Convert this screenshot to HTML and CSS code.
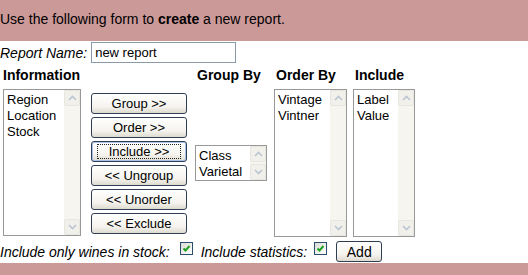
FILE: index.html
```html
<!DOCTYPE html>
<html lang="en">
<head>
    <meta charset="UTF-8">
    <meta name="viewport" content="width=device-width, initial-scale=1.0">
    <title>Create Report</title>
    <link rel="stylesheet" href="styles.css">
</head>
<body>

    <div class="banner">Use the following form to <b>create</b> a new report.</div>

    <form class="report-form">
        <div class="name-row">
            <label class="name-label" for="report-name">Report Name:</label>
            <input class="name-input" id="report-name" type="text" value="new report">
        </div>

        <div class="columns">
            <div class="col-head first">Information</div>
            <div class="col-head"></div>
            <div class="col-head">Group By</div>
            <div class="col-head">Order By</div>
            <div class="col-head">Include</div>

            <!-- Available fields -->
            <div class="listbox list-info">
                <ul class="list-items">
                    <li>Region</li>
                    <li>Location</li>
                    <li>Stock</li>
                </ul>
                <div class="scrollbar">
                    <span class="sb-btn"><svg width="9" height="6" viewBox="0 0 9 6"><polyline points="1,5 4.5,1.5 8,5" /></svg></span>
                    <span class="sb-btn"><svg width="9" height="6" viewBox="0 0 9 6"><polyline points="1,1 4.5,4.5 8,1" /></svg></span>
                </div>
            </div>

            <!-- Move buttons -->
            <div class="actions">
                <button type="button" class="btn">Group &gt;&gt;</button>
                <button type="button" class="btn">Order &gt;&gt;</button>
                <button type="button" class="btn btn-focus"><span class="focus-ring">Include &gt;&gt;</span></button>
                <button type="button" class="btn">&lt;&lt; Ungroup</button>
                <button type="button" class="btn">&lt;&lt; Unorder</button>
                <button type="button" class="btn">&lt;&lt; Exclude</button>
            </div>

            <div class="listbox list-group">
                <ul class="list-items">
                    <li>Class</li>
                    <li>Varietal</li>
                </ul>
                <div class="scrollbar">
                    <span class="sb-btn"><svg width="9" height="6" viewBox="0 0 9 6"><polyline points="1,5 4.5,1.5 8,5" /></svg></span>
                    <span class="sb-btn"><svg width="9" height="6" viewBox="0 0 9 6"><polyline points="1,1 4.5,4.5 8,1" /></svg></span>
                </div>
            </div>

            <div class="listbox list-order">
                <ul class="list-items">
                    <li>Vintage</li>
                    <li>Vintner</li>
                </ul>
                <div class="scrollbar">
                    <span class="sb-btn"><svg width="9" height="6" viewBox="0 0 9 6"><polyline points="1,5 4.5,1.5 8,5" /></svg></span>
                    <span class="sb-btn"><svg width="9" height="6" viewBox="0 0 9 6"><polyline points="1,1 4.5,4.5 8,1" /></svg></span>
                </div>
            </div>

            <div class="listbox list-include">
                <ul class="list-items">
                    <li>Label</li>
                    <li>Value</li>
                </ul>
                <div class="scrollbar">
                    <span class="sb-btn"><svg width="9" height="6" viewBox="0 0 9 6"><polyline points="1,5 4.5,1.5 8,5" /></svg></span>
                    <span class="sb-btn"><svg width="9" height="6" viewBox="0 0 9 6"><polyline points="1,1 4.5,4.5 8,1" /></svg></span>
                </div>
            </div>
        </div>

        <div class="options">
            <span class="opt-label">Include only wines in stock:</span>
            <span class="check first-check"><svg width="11" height="11" viewBox="0 0 11 11"><polyline points="2.5,5.5 4.5,7.5 8.5,3" /></svg></span>
            <span class="opt-label">Include statistics:</span>
            <span class="check second-check"><svg width="11" height="11" viewBox="0 0 11 11"><polyline points="2.5,5.5 4.5,7.5 8.5,3" /></svg></span>
            <button type="button" class="btn add-btn">Add</button>
        </div>
    </form>

    <div class="banner-bottom"></div>

</body>
</html>
```

FILE: styles.css
```css
* {
    box-sizing: border-box;
    margin: 0;
    padding: 0;
}

body {
    font-family: "Liberation Sans", Arial, sans-serif;
    font-size: 14px;
    color: #000;
    background: #fff;
    height: 275px;
    display: flex;
    flex-direction: column;
    overflow: hidden;
}

.banner {
    background: #cc9999;
    height: 41px;
    padding-top: 11px;
    line-height: 16px;
}

.banner-bottom {
    background: #cc9999;
    flex: 1;
}

/* Report name row */
.name-row {
    display: flex;
    align-items: center;
    height: 22px;
    padding-top: 1px;
}

.name-label {
    font-style: italic;
    line-height: 16px;
}

.name-input {
    margin-left: 4px;
    width: 145px;
    height: 21px;
    border: 1px solid #8b9aa8;
    padding: 0 3px;
    font: 13px "Liberation Sans", Arial, sans-serif;
    color: #000;
}

/* Columns of lists */
.columns {
    display: grid;
    grid-template-columns: 88px 104px 79px 79px 62px;
    grid-template-rows: 26px 148px;
    padding-left: 3px;
}

.col-head {
    font-weight: bold;
    line-height: 16px;
    padding: 4px 0 0 2px;
}

.col-head.first {
    padding-left: 0;
}

.listbox {
    display: flex;
    border: 1px solid #989898;
    background: #fff;
    height: 148px;
}

.list-info {
    width: 78px;
    height: 147px;
    align-self: start;
}

.list-group {
    width: 72px;
    height: 36px;
    align-self: center;
}

.list-order {
    width: 73px;
}

.list-include {
    width: 62px;
}

.list-items {
    flex: 1;
    list-style: none;
    padding: 2px 0 0 3px;
    font-size: 13px;
    line-height: 16px;
}

.scrollbar {
    width: 16px;
    display: flex;
    flex-direction: column;
    justify-content: space-between;
    background: #f6f5f0;
}

.sb-btn {
    height: 16px;
    display: flex;
    align-items: center;
    justify-content: center;
    background: #f1f0ea;
    border: 1px solid #e7e6df;
    border-radius: 2px;
}

.sb-btn polyline {
    fill: none;
    stroke: #bcc5d4;
    stroke-width: 1.6;
}

/* Buttons */
.actions {
    width: 96px;
    display: flex;
    flex-direction: column;
    gap: 3px;
    align-self: center;
}

.btn {
    height: 21px;
    border: 1px solid #2f3e53;
    border-radius: 3px;
    background: linear-gradient(#ffffff, #f5f4ef 65%, #dedbd0);
    font: 13px "Liberation Sans", Arial, sans-serif;
    color: #000;
    padding-top: 1px;
}

.btn-focus {
    padding: 2px 5px;
    box-shadow: inset 0 0 0 1px #a9c0e8;
}

.focus-ring {
    display: block;
    border: 1px dotted #222;
    line-height: 13px;
}

/* Options row */
.options {
    display: flex;
    align-items: center;
    height: 26px;
    padding-top: 3px;
}

.opt-label {
    font-style: italic;
    line-height: 16px;
}

.check {
    width: 13px;
    height: 13px;
    align-self: flex-start;
    margin-top: 2px;
    border: 1px solid #2a4e6e;
    background: linear-gradient(135deg, #dcdcd5, #ffffff);
    display: flex;
}

.check polyline {
    fill: none;
    stroke: #21a121;
    stroke-width: 2;
}

.first-check {
    margin-left: 10px;
    margin-right: 8px;
}

.second-check {
    margin-left: 7px;
}

.add-btn {
    width: 46px;
    margin-left: 9px;
    font-size: 14px;
}
```
